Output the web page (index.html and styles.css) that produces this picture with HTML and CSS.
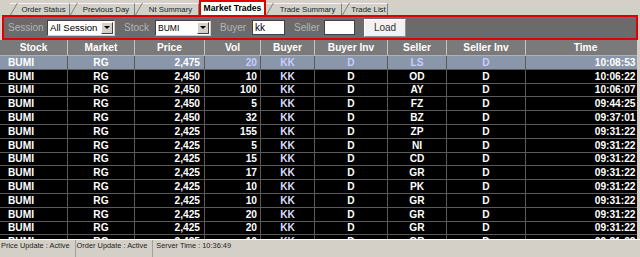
FILE: index.html
```html
<!DOCTYPE html>
<html lang="en">
<head>
    <meta charset="UTF-8">
    <title>Market Trades</title>
    <link rel="stylesheet" href="styles.css">
</head>
<body>
<div class="tabs">
    <div class="tab t-order">Order Status</div>
    <div class="tab t-prev">Previous Day</div>
    <div class="tab t-nt">Nt Summary</div>
    <div class="tab active t-market">Market Trades</div>
    <div class="tab t-summary">Trade Summary</div>
    <div class="tab t-list">Trade List</div>
</div>

<div class="toolbar">
    <span class="label l-session">Session</span>
    <div class="combo c-session"><span class="combo-text">All Session</span><span class="arrow"></span></div>
    <span class="label l-stock">Stock</span>
    <div class="combo c-stock"><span class="combo-text small">BUMI</span><span class="arrow"></span></div>
    <span class="label l-buyer">Buyer</span>
    <div class="field f-buyer">kk</div>
    <span class="label l-seller">Seller</span>
    <div class="field f-seller"></div>
    <button class="load">Load</button>
</div>

<div class="grid">
    <table>
        <thead>
            <tr>
                <th class="col-stock">Stock</th>
                <th class="col-market">Market</th>
                <th class="col-price">Price</th>
                <th class="col-vol">Vol</th>
                <th class="col-buyer">Buyer</th>
                <th class="col-binv">Buyer Inv</th>
                <th class="col-seller">Seller</th>
                <th class="col-sinv">Seller Inv</th>
                <th class="col-time">Time</th>
            </tr>
        </thead>
        <tbody id="trade-table">
            <!-- rows from script -->
        </tbody>
    </table>
</div>

<div class="status">
    <span class="status-part">Price Update : Active</span>
    <span class="status-part">Order Update : Active</span>
    <span class="status-part">Server Time : 10:36:49</span>
</div>

<script>
const trades = [
    ["2,475", 20, "LS", "10:08:53"],
    ["2,450", 10, "OD", "10:06:22"],
    ["2,450", 100, "AY", "10:06:07"],
    ["2,450", 5, "FZ", "09:44:25"],
    ["2,450", 32, "BZ", "09:37:01"],
    ["2,425", 155, "ZP", "09:31:22"],
    ["2,425", 5, "NI", "09:31:22"],
    ["2,425", 15, "CD", "09:31:22"],
    ["2,425", 17, "GR", "09:31:22"],
    ["2,425", 10, "PK", "09:31:22"],
    ["2,425", 10, "GR", "09:31:22"],
    ["2,425", 20, "GR", "09:31:22"],
    ["2,425", 20, "GR", "09:31:22"],
    ["2,425", 10, "GR", "09:31:22"],
    ["2,425", 100, "GR", "09:31:22"]
];

function loadTrades() {
    let tableBody = document.getElementById("trade-table");
    tableBody.innerHTML = trades.map((t, index) => `
        <tr class="${index === 0 ? 'selected' : ''}">
            <td class="col-stock">BUMI</td>
            <td class="col-market">RG</td>
            <td class="col-price">${t[0]}</td>
            <td class="col-vol">${t[1]}</td>
            <td class="col-buyer">KK</td>
            <td class="col-binv">D</td>
            <td class="col-seller">${t[2]}</td>
            <td class="col-sinv">D</td>
            <td class="col-time">${t[3]}</td>
        </tr>
    `).join("");
}

loadTrades();
</script>
</body>
</html>
```

FILE: styles.css
```css
body {
    margin: 0;
    width: 640px;
    height: 257px;
    overflow: hidden;
    background-color: #d4d0c8;
    font-family: 'Liberation Sans', Arial, sans-serif;
}

/* tab strip */
.tabs {
    display: flex;
    align-items: flex-end;
    height: 15px;
    padding-left: 10px;
}

.tab {
    position: relative;
    box-sizing: border-box;
    height: 12px;
    padding-left: 8px;
    border-top: 1px solid #f4f4f4;
    border-right: 1px solid #808080;
    font-size: 7.8px;
    line-height: 11px;
    color: #222;
    text-align: center;
    white-space: nowrap;
}

.tab::before {
    content: "";
    position: absolute;
    left: 0;
    top: -1px;
    bottom: 0;
    width: 5px;
    border-left: 1px solid #808080;
    transform: skewX(-30deg);
    transform-origin: bottom left;
}

.tab.active {
    height: 15px;
    padding-left: 0;
    border: 2px solid #e00000;
    border-bottom: none;
    background-color: #fff;
    color: #000;
    font-size: 8.6px;
    font-weight: bold;
    line-height: 13px;
}

.tab.active::before {
    display: none;
}

.t-order { width: 60px; }
.t-prev { width: 65px; }
.t-nt { width: 64px; }
.t-market { width: 67px; }
.t-summary { width: 76px; }
.t-list { width: 46px; }

/* filter bar */
.toolbar {
    display: flex;
    align-items: center;
    height: 21px;
    margin: 0 2px;
    padding-left: 2px;
    border: 2px solid #e00000;
    background-color: #6b6b6b;
}

.label {
    margin-left: 9px;
    font-size: 10px;
    color: #b4b4b4;
    white-space: nowrap;
}

.l-session { width: 39px; margin-left: 2px; }
.l-stock { width: 31px; }
.l-buyer { width: 32px; }
.l-seller { width: 30px; }

.combo {
    box-sizing: border-box;
    display: flex;
    align-items: center;
    height: 16px;
    padding: 0 1px 0 2px;
    background-color: #fff;
    border: 1px solid #404040;
    border-right-color: #d4d0c8;
    border-bottom-color: #d4d0c8;
}

.c-session { width: 68px; }
.c-stock { width: 56px; }

.combo-text {
    flex: 1;
    font-size: 9.6px;
    color: #000;
    white-space: nowrap;
    overflow: hidden;
}

.combo-text.small {
    font-size: 8.5px;
}

.arrow {
    box-sizing: border-box;
    display: flex;
    align-items: center;
    justify-content: center;
    flex: none;
    width: 12px;
    height: 12px;
    background-color: #d4d0c8;
    border: 1px solid #fff;
    border-right-color: #404040;
    border-bottom-color: #404040;
}

.arrow::after {
    content: "";
    border-left: 3px solid transparent;
    border-right: 3px solid transparent;
    border-top: 3px solid #000;
}

.field {
    box-sizing: border-box;
    height: 15px;
    padding-left: 2px;
    background-color: #fff;
    border: 1px solid #404040;
    font-size: 10px;
    line-height: 13px;
    color: #000;
}

.f-buyer { width: 33px; }
.f-seller { width: 31px; }

.load {
    box-sizing: border-box;
    width: 42px;
    height: 18px;
    margin-left: 9px;
    padding: 0;
    background-color: #f2f2f2;
    border: 1px solid #fff;
    border-right-color: #909090;
    border-bottom-color: #909090;
    font-family: 'Liberation Sans', Arial, sans-serif;
    font-size: 10px;
    color: #333;
}

/* trade grid */
.grid {
    width: 637px;
    height: 199px;
    overflow: hidden;
    background-color: #000;
}

table {
    width: 637px;
    table-layout: fixed;
    border-collapse: collapse;
    font-size: 10.2px;
    font-weight: bold;
    color: #fff;
}

th {
    height: 15px;
    padding: 0;
    background-color: #7a7a7a;
    border-left: 1px solid #c4c4c4;
    border-bottom: 1px solid #b0b0b0;
    text-align: center;
    font-weight: bold;
}

th:first-child {
    border-left: none;
}

td {
    height: 12.8px;
    padding: 0 4px;
    border: 1px solid #5a5a5a;
    line-height: 11px;
    text-align: center;
    white-space: nowrap;
    overflow: hidden;
}

td:first-child {
    border-left: none;
}

tr.selected td {
    background-color: #8a97ab;
    color: #c8ccff;
}

tr.selected .col-stock,
tr.selected .col-market,
tr.selected .col-price,
tr.selected .col-time {
    color: #fff;
}

.col-stock { width: 67px; }
.col-market { width: 66px; }
.col-price { width: 69px; }
.col-vol { width: 55px; }
.col-buyer { width: 53px; }
.col-binv { width: 72px; }
.col-seller { width: 58px; }
.col-sinv { width: 78px; }
.col-time { width: 119px; }

td.col-stock { text-align: left; padding-left: 8px; }
td.col-price { text-align: right; }
td.col-vol { text-align: right; padding-right: 3px; }
td.col-buyer { color: #dcdcff; }
td.col-time { text-align: right; padding-right: 9px; }

/* status bar */
.status {
    display: flex;
    height: 17px;
    border-top: 1px solid #fff;
    font-size: 7.4px;
    line-height: 10px;
    color: #222;
}

.status-part {
    padding: 1px 5px 0 1px;
    border-right: 1px solid #a0a0a0;
}

.status-part:last-child {
    border-right: none;
    padding-left: 3px;
}
```
